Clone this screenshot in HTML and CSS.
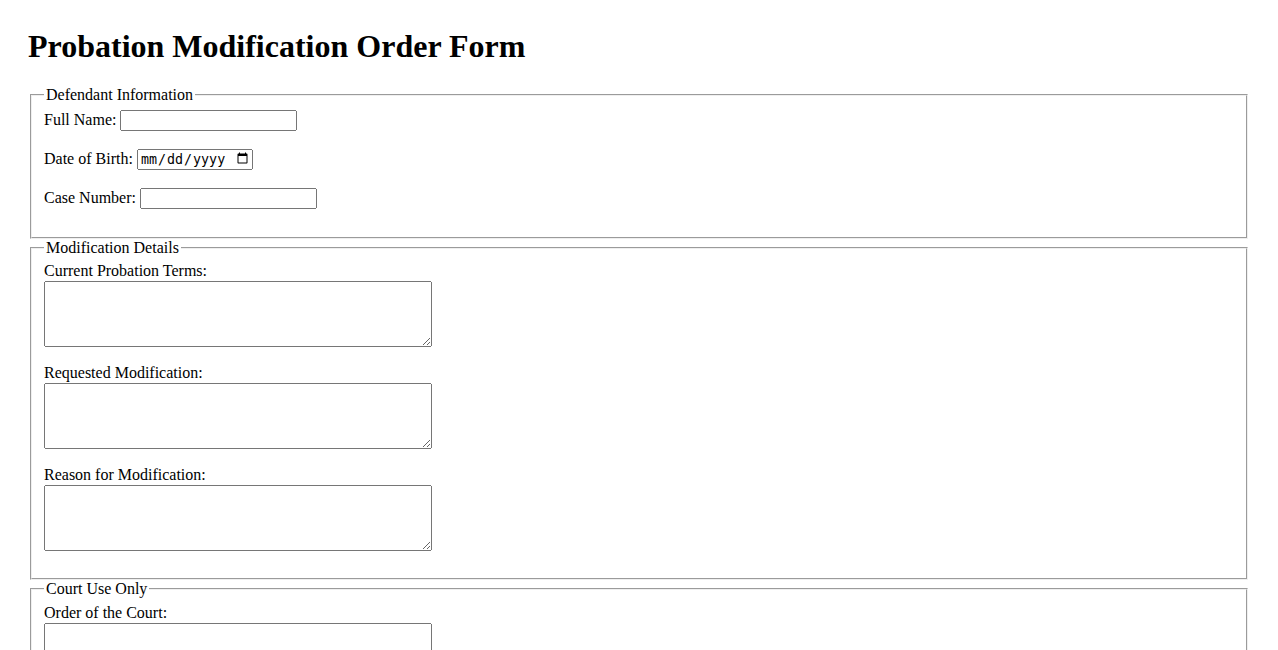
FILE: index.html
```html
<!DOCTYPE html>
<html lang="en">
<head>
<meta charset="UTF-8">
<title>Probation Modification Order Form</title>
<link rel="stylesheet" href="styles.css">
</head>
<body>
<h1 class="title">Probation Modification Order Form</h1>
<form class="order-form">
  <fieldset class="section">
    <legend>Defendant Information</legend>
    <div class="row">
      <label for="fullName">Full Name:</label>
      <input type="text" id="fullName" name="fullName" class="field">
    </div>
    <div class="row">
      <label for="dob">Date of Birth:</label>
      <input type="date" id="dob" name="dob" class="field field-date">
    </div>
    <div class="row">
      <label for="caseNumber">Case Number:</label>
      <input type="text" id="caseNumber" name="caseNumber" class="field">
    </div>
  </fieldset>

  <fieldset class="section">
    <legend>Modification Details</legend>
    <div class="row">
      <label for="currentTerms">Current Probation Terms:</label><br>
      <textarea id="currentTerms" name="currentTerms" rows="4" cols="50" class="area"></textarea>
    </div>
    <div class="row">
      <label for="requested">Requested Modification:</label><br>
      <textarea id="requested" name="requested" rows="4" cols="50" class="area"></textarea>
    </div>
    <div class="row">
      <label for="reason">Reason for Modification:</label><br>
      <textarea id="reason" name="reason" rows="4" cols="50" class="area"></textarea>
    </div>
  </fieldset>

  <fieldset class="section">
    <legend>Court Use Only</legend>
    <div class="row">
      <label for="order">Order of the Court:</label><br>
      <textarea id="order" name="order" rows="4" cols="50" class="area"></textarea>
    </div>
    <div class="row">
      <label for="judge">Judge's Signature:</label>
      <input type="text" id="judge" name="judge" class="field">
    </div>
    <div class="row">
      <label for="orderDate">Date:</label>
      <input type="date" id="orderDate" name="orderDate" class="field field-date">
    </div>
  </fieldset>
</form>
</body>
</html>
```

FILE: styles.css
```css
body {
margin: 0;
padding: 28px;
font-family: "Liberation Serif", "Times New Roman", serif;
font-size: 16px;
color: #000;
background: #fff;
}

.title {
margin: 0 0 21px 0;
font-size: 32px;
}

.section {
margin: 0 2px;
}

.row {
margin-bottom: 16px;
}

.field {
box-sizing: border-box;
width: 177px;
height: 21px;
margin: 0 0 2px 0;
}

.field-date {
width: 116px;
}

.area {
box-sizing: border-box;
width: 388px;
height: 66px;
margin: 1px 0;
vertical-align: bottom;
}
```
